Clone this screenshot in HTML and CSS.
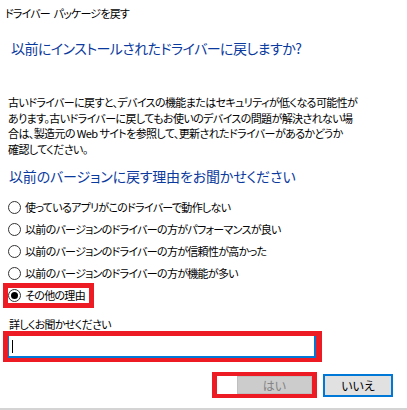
FILE: index.html
```html
<!DOCTYPE html>
<html lang="ja">
<head>
<meta charset="utf-8">
<title>ドライバー パッケージを戻す</title>
<link rel="stylesheet" href="styles.css">
</head>
<body>
<div class="dialog">
  <div class="title">ドライバー パッケージを戻す</div>
  <h1 class="main">以前にインストールされたドライバーに戻しますか?</h1>
  <p class="desc">古いドライバーに戻すと、デバイスの機能またはセキュリティが低くなる可能性が<br>あります。古いドライバーに戻してもお使いのデバイスの問題が解決されない場<br>合は、製造元の Web サイトを参照して、更新されたドライバーがあるかどうか<br>確認してください。</p>
  <h2 class="sub">以前のバージョンに戻す理由をお聞かせください</h2>
  <ul class="options">
    <li class="option"><span class="mark"><span class="radio"></span><span class="label">使っているアプリがこのドライバーで動作しない</span></span></li>
    <li class="option"><span class="mark"><span class="radio"></span><span class="label">以前のバージョンのドライバーの方がパフォーマンスが良い</span></span></li>
    <li class="option"><span class="mark"><span class="radio"></span><span class="label">以前のバージョンのドライバーの方が信頼性が高かった</span></span></li>
    <li class="option"><span class="mark"><span class="radio"></span><span class="label">以前のバージョンのドライバーの方が機能が多い</span></span></li>
    <li class="option marked"><span class="mark"><span class="radio checked"></span><span class="label">その他の理由</span></span></li>
  </ul>
  <div class="detail-label">詳しくお聞かせください</div>
  <div class="field-mark"><div class="input"><span class="caret"></span></div></div>
  <div class="actions">
    <div class="mark-yes"><span class="spacer"></span><button class="btn disabled">はい</button></div>
    <button class="btn primary">いいえ</button>
  </div>
  <div class="bottom-strip"></div>
</div>
</body>
</html>
```
FILE: styles.css
```css
html, body {
  margin: 0;
  padding: 0;
  background: #ffffff;
}
body {
  font-family: "Noto Sans CJK JP", "Noto Sans", sans-serif;
  font-feature-settings: "palt" 1;
  color: #000000;
  width: 407px;
  height: 410px;
  overflow: hidden;
}
.dialog {
  display: flex;
  flex-direction: column;
}
.title {
  padding: 6px 0 0 5px;
  font-size: 11px;
  letter-spacing: -0.8px;
  word-spacing: 2px;
  line-height: 14px;
}
.main {
  margin: 18px 0 0 11px;
  font-size: 14px;
  letter-spacing: -0.55px;
  line-height: 20px;
  font-weight: normal;
  color: #0b3a9e;
}
.desc {
  margin: 37px 0 0 8px;
  font-size: 11px;
  letter-spacing: -0.6px;
  line-height: 15.5px;
  white-space: nowrap;
}
.sub {
  margin: 9px 0 0 9px;
  font-size: 14px;
  letter-spacing: -0.15px;
  line-height: 20px;
  font-weight: normal;
  color: #0b3a9e;
}
.options {
  list-style: none;
  margin: 10px 0 0 0;
  padding: 0;
}
.option {
  height: 22px;
  display: flex;
  align-items: center;
  padding-left: 8px;
  font-size: 11px;
  letter-spacing: -0.7px;
}
.mark {
  display: inline-flex;
  align-items: center;
  height: 15px;
}
.option.marked .mark {
  outline: 5px solid #ed1c24;
  padding-right: 4px;
}
.radio {
  width: 11px;
  height: 11px;
  border: 1px solid #333333;
  border-radius: 50%;
  box-sizing: content-box;
  margin-right: 4px;
  display: inline-flex;
  align-items: center;
  justify-content: center;
  background: #ffffff;
}
.radio.checked::after {
  content: "";
  width: 7px;
  height: 7px;
  border-radius: 50%;
  background: #000000;
}
.label {
  line-height: 15px;
}
.detail-label {
  margin: 12px 0 0 9px;
  font-size: 11px;
  letter-spacing: -0.7px;
  line-height: 13px;
}
.field-mark {
  margin: 0 0 0 3px;
  width: 308px;
  border: 5px solid #ed1c24;
  border-right-width: 6px;
  border-bottom-width: 4px;
}
.input {
  height: 20px;
  background: #ffffff;
  border-left: 1px solid #0078d7;
  border-right: 2px solid #0078d7;
  border-bottom: 2px solid #0078d7;
  display: flex;
  align-items: center;
  padding-left: 3px;
}
.caret {
  width: 1px;
  height: 13px;
  background: #000000;
}
.actions {
  margin-top: 10px;
  display: flex;
  justify-content: flex-end;
  align-items: flex-start;
  padding-right: 14px;
  gap: 6px;
}
.mark-yes {
  display: flex;
  border: 4px solid #ed1c24;
  border-left-width: 5px;
  border-right-width: 5px;
  height: 18px;
}
.spacer {
  width: 20px;
  background: #ffffff;
}
.btn {
  font-family: "Noto Sans CJK JP", sans-serif;
  font-feature-settings: "palt" 1;
  font-size: 12px;
  padding: 0;
  margin: 0;
  display: flex;
  align-items: center;
  justify-content: center;
}
.btn.disabled {
  width: 75px;
  height: 18px;
  background: #cccccc;
  border: 1px solid #bfbfbf;
  color: #838383;
}
.btn.primary {
  margin-top: 2px;
  width: 70px;
  height: 23px;
  background: #e1e1e1;
  border: 2px solid #0078d7;
  color: #000000;
}
.bottom-strip {
  margin-top: 10px;
  height: 3px;
  background: #d4d4d4;
}
```
